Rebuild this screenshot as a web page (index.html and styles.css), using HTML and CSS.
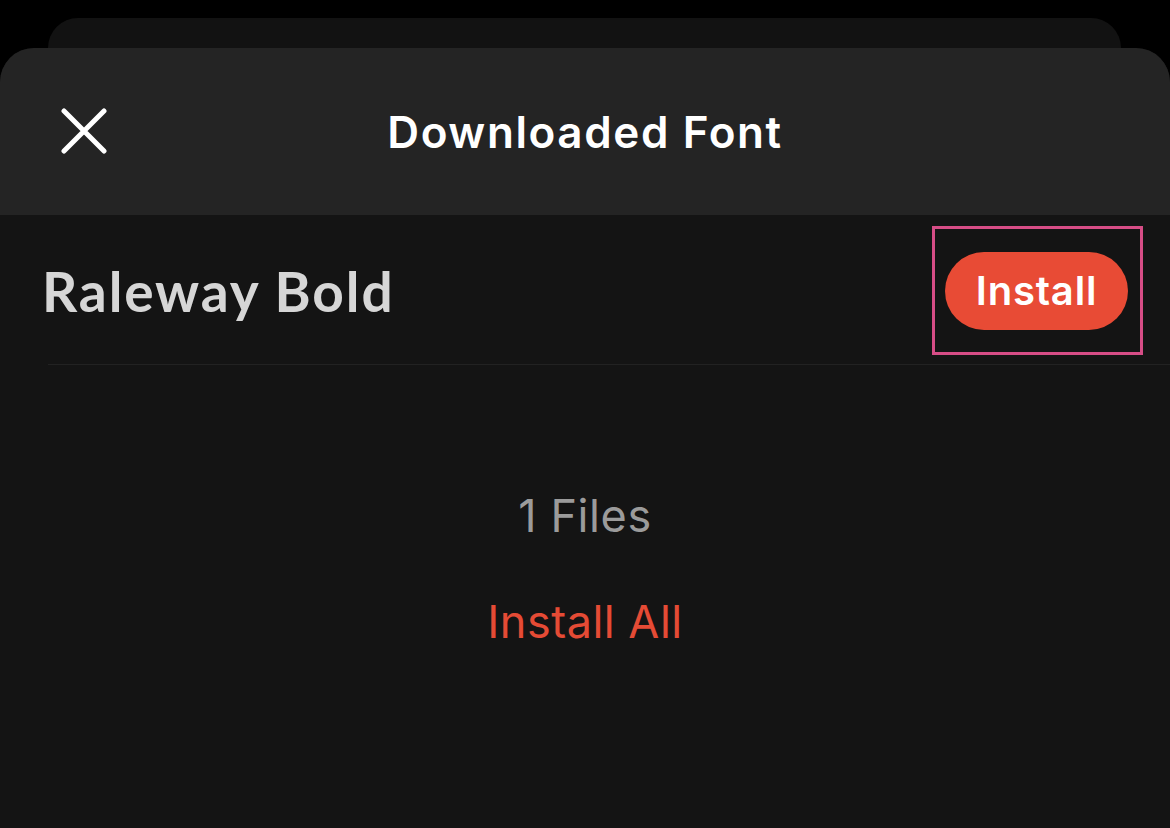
FILE: index.html
```html
<!DOCTYPE html>
<html>
<head>
<meta charset="utf-8">
<link rel="stylesheet" href="styles.css">
</head>
<body>
<div class="screen">
  <div class="back-card"></div>
  <div class="sheet">
    <header class="sheet-header">
      <button class="close" aria-label="Close">
        <svg width="46" height="46" viewBox="0 0 46 46"><path d="M3 3 L43 43 M43 3 L3 43" stroke="#fff" stroke-width="5" stroke-linecap="round" fill="none"/></svg>
      </button>
      <h1 class="title">Downloaded Font</h1>
    </header>
    <div class="sheet-body">
      <div class="font-row">
        <span class="font-name">Raleway Bold</span>
        <div class="highlight">
          <button class="install-btn">Install</button>
        </div>
      </div>
      <div class="summary">
        <div class="count">1 Files</div>
        <div class="install-all">Install All</div>
      </div>
    </div>
  </div>
</div>
</body>
</html>
```

FILE: styles.css
```css
html, body {
  margin: 0;
  padding: 0;
  background: #000;
  height: 100%;
}
.screen {
  width: 1170px;
  height: 828px;
  overflow: hidden;
  display: flex;
  flex-direction: column;
  font-family: Inter, "Liberation Sans", sans-serif;
}
.back-card {
  margin: 18px 49px 0 48px;
  height: 30px;
  background: #121212;
  border-radius: 30px 30px 0 0;
  flex: none;
}
.sheet {
  flex: 1;
  display: flex;
  flex-direction: column;
  border-radius: 34px 34px 0 0;
  overflow: hidden;
  background: #141414;
}
.sheet-header {
  height: 167px;
  flex: none;
  background: #242424;
  position: relative;
  display: flex;
  align-items: center;
  justify-content: center;
}
.close {
  position: absolute;
  left: 61px;
  top: 60px;
  width: 46px;
  height: 46px;
  padding: 0;
  border: 0;
  background: none;
  display: flex;
}
.title {
  margin: 0;
  color: #fff;
  font-size: 44px;
  font-weight: 600;
  letter-spacing: 1.6px;
}
.sheet-body {
  flex: 1;
  display: flex;
  flex-direction: column;
}
.font-row {
  height: 149px;
  margin-left: 48px;
  border-bottom: 1px solid #222;
  display: flex;
  align-items: center;
  justify-content: space-between;
}
.font-name {
  margin-left: -6px;
  margin-top: 2px;
  color: #d6d6d6;
  font-family: Lato, "Open Sans", sans-serif;
  font-weight: 700;
  font-size: 55px;
  letter-spacing: 1.9px;
}
.highlight {
  margin-right: 27px;
  margin-top: 1px;
  border: 3px solid #d64d86;
  padding: 23px 12px 22px 10px;
}
.install-btn {
  display: block;
  width: 183px;
  height: 78px;
  border: 0;
  border-radius: 39px;
  background: #e84b35;
  color: #fff;
  font-family: Inter, "Liberation Sans", sans-serif;
  font-size: 40px;
  font-weight: 600;
  letter-spacing: 0.8px;
  padding: 0;
}
.summary {
  display: flex;
  flex-direction: column;
  align-items: center;
  padding-top: 124px;
  gap: 52px;
}
.count {
  color: #9b9b9b;
  font-size: 45px;
  letter-spacing: 0.6px;
  line-height: 54px;
}
.install-all {
  color: #e54b35;
  font-size: 45px;
  letter-spacing: 0.5px;
  line-height: 54px;
}
```
